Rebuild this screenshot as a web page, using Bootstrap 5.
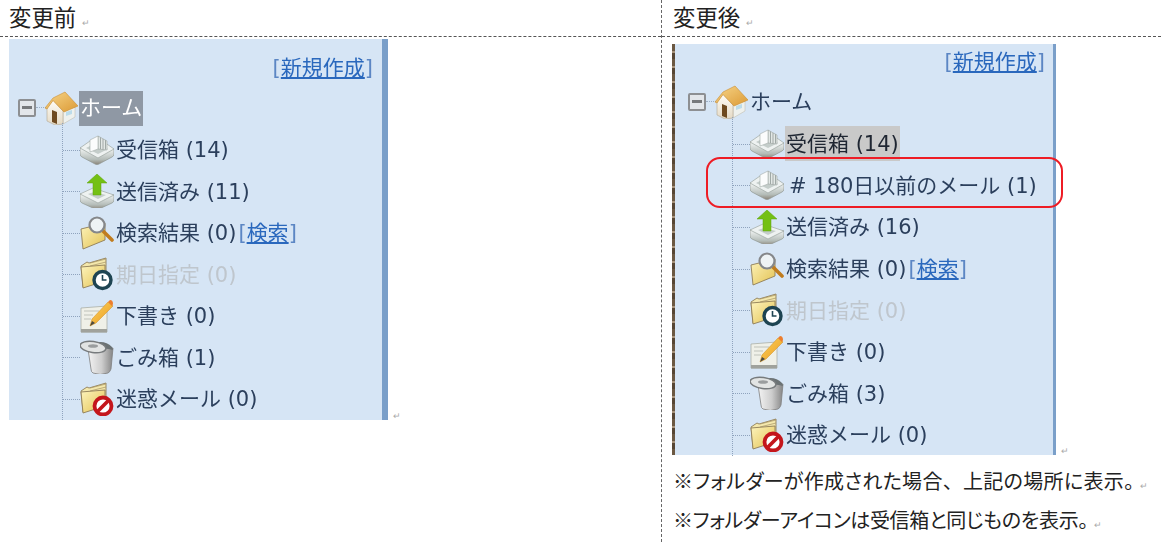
<!DOCTYPE html>
<html lang="ja">

<head>
  <meta charset="UTF-8" />
  <title>変更前 / 変更後</title>
  <meta name="viewport" content="width=device-width, initial-scale=1" />
  <link href="https://cdn.jsdelivr.net/npm/bootstrap@5.3.0/dist/css/bootstrap.min.css" rel="stylesheet" />
  <style>
    body {
      background: #fff;
      color: #222;
      font-family: "Noto Sans CJK JP", "Liberation Sans", sans-serif;
      overflow: hidden;
    }

    .sheet {
      width: 1161px;
      height: 542px;
    }

    .col-before {
      width: 661px;
    }

    .col-after {
      width: 500px;
      border-left: 1px dashed #666;
    }

    .head-cell {
      height: 37px;
      padding-left: 9px;
      font-size: 22.4px;
      line-height: 33px;
      border-bottom: 1px dashed #555;
    }

    .col-after .head-cell {
      padding-left: 11px;
    }

    .para-mark {
      font-size: 9px;
      line-height: 1;
      color: #aaa;
      margin-left: 6px;
    }

    /* panel */
    .tree-panel {
      position: relative;
      background: #d6e5f5;
      font-family: "DejaVu Sans", "Noto Sans CJK JP", sans-serif;
      font-size: 21px;
      color: #2b3f5c;
      filter: blur(0.45px);
    }

    .panel-before {
      width: 379px;
      margin: 2px 0 0 9px;
      height: 381px;
      border-right: 6px solid #7a9fc9;
      padding-top: 15px;
      overflow: hidden;
    }

    .panel-after {
      width: 384px;
      margin: 7px 0 0 10px;
      height: 411px;
      border-right: 3px solid #7a9fc9;
      border-left: 3px solid #7d6a52;
      padding-top: 4px;
    }

    .panel-after::before {
      content: "";
      position: absolute;
      left: -3px;
      top: 0;
      bottom: 0;
      width: 3px;
      background: repeating-linear-gradient(180deg, #6b5842 0 7px, #a8937a 7px 9px, #574634 9px 15px);
    }

    .new-link {
      height: 28px;
      line-height: 28px;
      padding-right: 9px;
      text-align: right;
      color: #5c86c4;
    }

    .panel-after .new-link {
      padding-right: 8px;
    }

    .blue-link {
      color: #2a68bd;
      text-decoration: underline;
    }

    .side-link {
      color: #5c86c4;
      margin-left: 2px;
    }

    .home-row {
      height: 42px;
      margin-top: 5px;
      padding-left: 9px;
    }

    .panel-after .home-row {
      padding-left: 13px;
    }

    .tog-box {
      width: 18px;
      height: 18px;
      margin-right: 8px;
      background: #e3e6ea;
      border: 2px solid #8d8f92;
      border-radius: 2px;
      position: relative;
      flex: none;
    }

    .tog-box::before {
      content: "";
      position: absolute;
      left: 2px;
      right: 2px;
      top: 5px;
      height: 3px;
      background: #77797c;
    }

    .tog-box::after {
      content: "";
      position: absolute;
      left: 16px;
      top: 6px;
      width: 10px;
      border-top: 1px dotted #9fb0c6;
    }

    .ico-home {
      width: 34px;
      height: 34px;
      flex: none;
      position: relative;
    }

    .home-lbl {
      margin-left: 1px;
      padding: 0 1px;
      height: 35px;
      line-height: 35px;
    }

    .home-lbl.is-sel {
      background: #8f98a4;
      color: #fff;
    }

    .tree-kids {
      position: relative;
      margin-left: 53px;
      padding-left: 0;
      margin-bottom: 0;
      list-style: none;
    }

    .panel-after .tree-kids {
      margin-left: 57px;
    }

    .tree-kids::before {
      content: "";
      position: absolute;
      left: 0;
      top: -6px;
      bottom: 0;
      border-left: 1px dotted #8fa3bd;
    }

    .tree-item {
      position: relative;
      height: 41.5px;
      padding-left: 18px;
      white-space: nowrap;
    }

    .panel-after .tree-item {
      height: 41.6px;
    }

    .tree-item::before {
      content: "";
      position: absolute;
      left: 1px;
      top: 50%;
      width: 17px;
      border-top: 1px dotted #8fa3bd;
    }

    .tree-ico {
      width: 34px;
      height: 34px;
      flex: none;
      margin-right: 2px;
      overflow: visible;
    }

    .item-lbl {
      height: 35px;
      line-height: 36px;
    }

    .item-lbl.is-off {
      color: #bfc6cd;
    }

    .item-lbl.is-cur {
      background: #c9c9c9;
      color: #1f2632;
      padding-right: 1px;
      margin-left: -1px;
      padding-left: 1px;
    }

    .item-lbl.is-new {
      margin-left: 3px;
    }

    .red-frame {
      position: absolute;
      left: 31px;
      top: 113px;
      width: 357px;
      height: 51px;
      border: 2px solid #ee1c25;
      border-radius: 14px;
      pointer-events: none;
    }

    .panel-mark {
      font-size: 9px;
      color: #aaa;
      line-height: 1;
      margin-left: 5px;
    }

    .note-list {
      margin: 6px 0 0 11px;
      font-size: 20px;
      line-height: 39px;
      font-feature-settings: "palt";
      white-space: nowrap;
    }

    .note-wide {
      letter-spacing: .3px;
    }

    .note-tight {
      letter-spacing: -.3px;
    }

    .full-punct {
      font-feature-settings: normal;
    }
  </style>
</head>

<body>
  <!-- icon set -->
  <svg class="position-absolute" width="0" height="0" aria-hidden="true">
    <defs>
      <linearGradient id="g-roof" x1="0" y1="0" x2="1" y2="1">
        <stop offset="0" stop-color="#f7d68a" />
        <stop offset="1" stop-color="#dc9a35" />
      </linearGradient>
      <linearGradient id="g-wall" x1="0" y1="0" x2="0" y2="1">
        <stop offset="0" stop-color="#fffdf7" />
        <stop offset="1" stop-color="#e4dac6" />
      </linearGradient>
      <linearGradient id="g-tray" x1="0" y1="0" x2="0" y2="1">
        <stop offset="0" stop-color="#f4f7f6" />
        <stop offset=".7" stop-color="#b4bcb8" />
        <stop offset="1" stop-color="#8b8478" />
      </linearGradient>
      <linearGradient id="g-folder" x1="0" y1="0" x2="1" y2="1">
        <stop offset="0" stop-color="#fdf4bd" />
        <stop offset="1" stop-color="#e3c252" />
      </linearGradient>
      <linearGradient id="g-can" x1="0" y1="0" x2="1" y2="0">
        <stop offset="0" stop-color="#f4f4f4" />
        <stop offset="0.55" stop-color="#cdcdcd" />
        <stop offset="1" stop-color="#858585" />
      </linearGradient>
      <linearGradient id="g-pencil" x1="0" y1="0" x2="1" y2="1">
        <stop offset="0" stop-color="#fbd35e" />
        <stop offset="1" stop-color="#ec9a1e" />
      </linearGradient>

      <symbol id="i-home" viewBox="0 0 34 34">
        <path d="M19 20l12-4v10l-12 7z" fill="#eef1ee" stroke="#bdb6a4" stroke-width=".5" />
        <path d="M22 21l6-2v4l-6 2z" fill="#bcdcea" />
        <path d="M3 17l6-8 10 11v13l-8 1-8-4z" fill="url(#g-wall)" stroke="#b3a68f" stroke-width=".6" />
        <path d="M8 19l5 2v12l-5-2z" fill="#6e4a20" />
        <path d="M1 17 9 7 21 1 34 15 20 21 9 9.500 3 18z" fill="url(#g-roof)" stroke="#c98d33" stroke-width=".6" />
      </symbol>

      <symbol id="i-inbox" viewBox="0 0 34 34">
        <path d="M0 15v6q0 2 2 3l13 7q2 1 4 0l13-7q2-1 2-3v-5z" fill="url(#g-tray)" stroke="#8f9692" stroke-width=".7" />
        <path d="M0 15 10 8h3l11 1 10 7-16 9z" fill="#eef2f1" stroke="#9ea6a2" stroke-width=".7" />
        <path d="M6 15l6-3h10l6 4-10 5z" fill="#c4cdca" />
        <path d="M18 3l9 5v9l-9-1z" fill="#e3e8e6" stroke="#9aa3a0" stroke-width=".6" />
        <path d="M20.500 4.500V16M23 6v10.500M25.500 7.200v9.300" stroke="#8f9895" stroke-width=".8" fill="none" />
        <path d="M10 7l8-4v13l-8 3z" fill="#fbfcfc" stroke="#a3aba7" stroke-width=".6" />
      </symbol>

      <symbol id="i-sent" viewBox="0 0 34 34">
        <path d="M0 20v6q0 2 2 3l13 6q2 1 4 0l13-6q2-1 2-3v-5z" fill="url(#g-tray)" stroke="#8f9692" stroke-width=".7" />
        <path d="M0 20l13-6 21 7-16 8z" fill="#eef2f1" stroke="#9ea6a2" stroke-width=".7" />
        <path d="M8 20l6-2 12 3-8 4z" fill="#c4cdca" />
        <path d="M17 0l10 9h-6v12h-8V9H7z" fill="#74c014" stroke="#5da00d" stroke-width=".5" />
      </symbol>

      <symbol id="i-folder" viewBox="0 0 34 34">
        <path d="M1 9 7 5l2 1L26 1v20L3 30z" fill="#f4e8ac" stroke="#8f7d57" stroke-width=".9" />
        <path d="M10 6l16-4M10 9l16-4" stroke="#ad9c6c" stroke-width=".8" fill="none" />
        <path d="M1 10l24-2v16L3 31z" fill="url(#g-folder)" stroke="#8f7d57" stroke-width=".9" />
      </symbol>

      <symbol id="i-search" viewBox="0 0 34 34">
        <path d="M1 13l24-6v17L3 33z" fill="url(#g-folder)" stroke="#8f7d57" stroke-width=".9" />
        <path d="M23 15l9 9" stroke="#c07c1e" stroke-width="3.600" stroke-linecap="round" />
        <circle cx="17" cy="9" r="7.500" fill="#eef3f5" stroke="#85878a" stroke-width="2.200" />
      </symbol>

      <symbol id="i-clock" viewBox="0 0 34 34">
        <use href="#i-folder" width="34" height="34" />
        <circle cx="22.500" cy="23" r="8.500" fill="#fff" stroke="#1e4452" stroke-width="3.400" />
        <path d="M22.500 18v5h4" stroke="#1e4452" stroke-width="1.600" fill="none" />
      </symbol>

      <symbol id="i-spam" viewBox="0 0 34 34">
        <use href="#i-folder" width="34" height="34" />
        <circle cx="23" cy="24" r="8.500" fill="#fff" stroke="#c4161c" stroke-width="3.800" />
        <path d="M17.500 29.500 28.500 18.500" stroke="#c4161c" stroke-width="3.800" />
      </symbol>

      <symbol id="i-draft" viewBox="0 0 34 34">
        <path d="M1 9l26-2v26H1z" fill="#eff0e8" stroke="#a4a79e" stroke-width=".7" />
        <path d="M1 30h26v3.500H1z" fill="#a0a29c" />
        <path d="M4 12h15M4 16h9M4 20h7" stroke="#bfc2ba" stroke-width="1.200" />
        <path d="M10 27l2-7L28 3l5 4-17 17z" fill="url(#g-pencil)" stroke="#cf8a1c" stroke-width=".5" />
        <path d="M28 3l2-2q3 0 3 4l-1 2z" fill="#ec7d2d" />
        <path d="M10 27l2-5 3 2z" fill="#4a4a44" />
      </symbol>

      <symbol id="i-trash" viewBox="0 0 34 34">
        <path d="M8 9 33 8l-2 21q-1 3-3 4-8 3-15 0-2-1-2-4z" fill="url(#g-can)" stroke="#7f7f7f" stroke-width=".8" />
        <path d="M14 3q11-3 18 4l1 3q-8-3-17 0z" fill="#6b7274" />
        <ellipse cx="13" cy="7" rx="13" ry="5.500" transform="rotate(8 13 7)" fill="#e2e4e3" stroke="#777b7d" stroke-width="1.500" />
        <ellipse cx="13" cy="6" rx="5" ry="1.800" fill="#9a9d9e" />
      </symbol>
    </defs>
  </svg>

  <div class="sheet d-flex">
    <div class="col-before">
      <div class="head-cell">変更前<span class="para-mark">↵</span></div>
      <div class="d-flex align-items-end">
        <div class="tree-panel panel-before">
          <div class="new-link">[<span class="blue-link">新規作成</span>]</div>
          <div class="home-row d-flex align-items-center">
            <span class="tog-box"></span>
            <svg class="ico-home"><use href="#i-home" /></svg>
            <span class="home-lbl is-sel">ホーム</span>
          </div>
          <ul class="tree-kids">
            <li class="tree-item d-flex align-items-center"><svg class="tree-ico"><use href="#i-inbox" /></svg><span class="item-lbl">受信箱 (14)</span></li>
            <li class="tree-item d-flex align-items-center"><svg class="tree-ico"><use href="#i-sent" /></svg><span class="item-lbl">送信済み (11)</span></li>
            <li class="tree-item d-flex align-items-center"><svg class="tree-ico"><use href="#i-search" /></svg><span class="item-lbl">検索結果 (0)<span class="side-link">[<span class="blue-link">検索</span>]</span></span></li>
            <li class="tree-item d-flex align-items-center"><svg class="tree-ico"><use href="#i-clock" /></svg><span class="item-lbl is-off">期日指定 (0)</span></li>
            <li class="tree-item d-flex align-items-center"><svg class="tree-ico"><use href="#i-draft" /></svg><span class="item-lbl">下書き (0)</span></li>
            <li class="tree-item d-flex align-items-center"><svg class="tree-ico"><use href="#i-trash" /></svg><span class="item-lbl">ごみ箱 (1)</span></li>
            <li class="tree-item d-flex align-items-center"><svg class="tree-ico"><use href="#i-spam" /></svg><span class="item-lbl">迷惑メール (0)</span></li>
          </ul>
        </div>
        <span class="panel-mark">↵</span>
      </div>
    </div>

    <div class="col-after">
      <div class="head-cell">変更後<span class="para-mark">↵</span></div>
      <div class="d-flex align-items-end">
        <div class="tree-panel panel-after">
          <div class="new-link">[<span class="blue-link">新規作成</span>]</div>
          <div class="home-row d-flex align-items-center">
            <span class="tog-box"></span>
            <svg class="ico-home"><use href="#i-home" /></svg>
            <span class="home-lbl">ホーム</span>
          </div>
          <ul class="tree-kids">
            <li class="tree-item d-flex align-items-center"><svg class="tree-ico"><use href="#i-inbox" /></svg><span class="item-lbl is-cur">受信箱 (14)</span></li>
            <li class="tree-item d-flex align-items-center"><svg class="tree-ico"><use href="#i-inbox" /></svg><span class="item-lbl is-new"># 180日以前のメール (1)</span></li>
            <li class="tree-item d-flex align-items-center"><svg class="tree-ico"><use href="#i-sent" /></svg><span class="item-lbl">送信済み (16)</span></li>
            <li class="tree-item d-flex align-items-center"><svg class="tree-ico"><use href="#i-search" /></svg><span class="item-lbl">検索結果 (0)<span class="side-link">[<span class="blue-link">検索</span>]</span></span></li>
            <li class="tree-item d-flex align-items-center"><svg class="tree-ico"><use href="#i-clock" /></svg><span class="item-lbl is-off">期日指定 (0)</span></li>
            <li class="tree-item d-flex align-items-center"><svg class="tree-ico"><use href="#i-draft" /></svg><span class="item-lbl">下書き (0)</span></li>
            <li class="tree-item d-flex align-items-center"><svg class="tree-ico"><use href="#i-trash" /></svg><span class="item-lbl">ごみ箱 (3)</span></li>
            <li class="tree-item d-flex align-items-center"><svg class="tree-ico"><use href="#i-spam" /></svg><span class="item-lbl">迷惑メール (0)</span></li>
          </ul>
          <div class="red-frame"></div>
        </div>
        <span class="panel-mark">↵</span>
      </div>
      <div class="note-list">
        <div class="note-wide">※フォルダーが作成された場合<span class="full-punct">、</span>上記の場所に表示。<span class="para-mark">↵</span></div>
        <div class="note-tight">※フォルダーアイコンは受信箱と同じものを表示。<span class="para-mark">↵</span></div>
      </div>
    </div>
  </div>
  <script src="https://cdn.jsdelivr.net/npm/bootstrap@5.3.0/dist/js/bootstrap.bundle.min.js"></script>
</body>

</html>
